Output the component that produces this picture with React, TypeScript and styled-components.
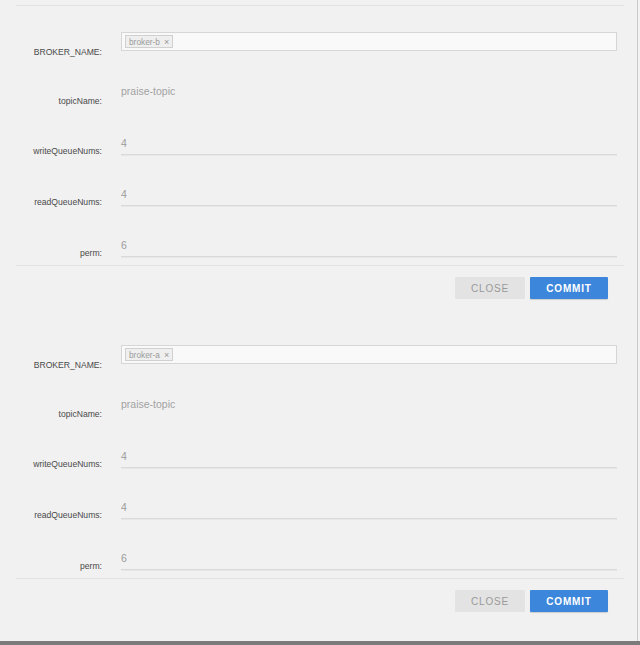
import React from "react";
import styled, { createGlobalStyle } from "styled-components";

const GlobalStyle = createGlobalStyle`
  html, body { margin: 0; padding: 0; background: #f3f3f3; }
  body { font-family: "Liberation Sans", Arial, sans-serif; }
  * { box-sizing: border-box; }
`;

const Screen = styled.div`
  width: 640px;
  height: 645px;
  display: flex;
  flex-direction: column;
  background: #f3f3f3;
`;

const Frame = styled.div`
  width: 638px;
  height: 641px;
  background: #f1f1f1;
  border-right: 1px solid #c9c9c9;
  padding-top: 5px;
  display: flex;
  flex-direction: column;
`;

const BottomBand = styled.div`
  height: 4px;
  background: #7b7b7b;
`;

const Rule = styled.div`
  height: 1px;
  margin: 0 13px 0 16px;
  background: #e2e2e2;
  flex: none;
`;

const Section = styled.section`
  padding: 27px 0 20px;
  display: flex;
  flex-direction: column;
`;

const FormGrid = styled.div`
  display: grid;
  grid-template-rows: repeat(4, 51px) 28px;
`;

const Row = styled.div`
  display: grid;
  grid-template-columns: 102px 1fr;
  column-gap: 19px;
  align-items: start;
  padding-right: 20px;
`;

const Label = styled.label<{ $pad: number }>`
  padding-top: ${(p) => p.$pad}px;
  text-align: right;
  font-size: 8.6px;
  line-height: 12px;
  color: #4a4a4a;
`;

const SelectBox = styled.div`
  height: 19px;
  margin-top: -1px;
  border: 1px solid #d6d6d6;
  background: #f9f9f9;
  padding: 2px 3px;
  display: flex;
  align-items: center;
`;

const Tag = styled.span`
  display: inline-flex;
  align-items: center;
  gap: 4px;
  height: 13px;
  padding: 0 3px;
  border: 1px solid #d0d0d0;
  background: #efefef;
  font-size: 8.3px;
  color: #9a9a9a;
`;

const TagClose = styled.span`
  font-size: 9px;
  color: #999;
`;

const PlainValue = styled.div`
  font-size: 10.5px;
  line-height: 14px;
  color: #a2a2a2;
`;

const NumberField = styled.div`
  height: 20px;
  padding-top: 1px;
  border-bottom: 1px solid #dadada;
  box-shadow: 0 1px 0 #e7e7e7;
  font-size: 10.5px;
  line-height: 14px;
  color: #9c9c9c;
`;

const Footer = styled.div`
  display: flex;
  justify-content: flex-end;
  gap: 5px;
  padding: 11px 29px 0 0;
`;

const Button = styled.button<{ $primary?: boolean }>`
  height: 22px;
  width: ${(p) => (p.$primary ? 78 : 70)}px;
  border: none;
  border-radius: 1px;
  font-family: "Liberation Sans", Arial, sans-serif;
  font-size: 10px;
  letter-spacing: 0.8px;
  font-weight: ${(p) => (p.$primary ? 700 : 400)};
  background: ${(p) => (p.$primary ? "#3c86db" : "#e3e3e3")};
  color: ${(p) => (p.$primary ? "#ffffff" : "#999999")};
  box-shadow: ${(p) => (p.$primary ? "0 1px 1px rgba(0,0,0,0.15)" : "none")};
  padding: 0;
  cursor: pointer;
`;

type TopicForm = { broker: string; topic: string; write: number; read: number; perm: number };

const forms: TopicForm[] = [
  { broker: "broker-b", topic: "praise-topic", write: 4, read: 4, perm: 6 },
  { broker: "broker-a", topic: "praise-topic", write: 4, read: 4, perm: 6 },
];

function TopicSection({ f }: { f: TopicForm }) {
  return (
    <Section>
      <FormGrid>
        <Row>
          <Label $pad={13}>BROKER_NAME:</Label>
          <SelectBox>
            <Tag>
              {f.broker}
              <TagClose>×</TagClose>
            </Tag>
          </SelectBox>
        </Row>
        <Row>
          <Label $pad={11}>topicName:</Label>
          <PlainValue>{f.topic}</PlainValue>
        </Row>
        <Row>
          <Label $pad={10}>writeQueueNums:</Label>
          <NumberField>{f.write}</NumberField>
        </Row>
        <Row>
          <Label $pad={10}>readQueueNums:</Label>
          <NumberField>{f.read}</NumberField>
        </Row>
        <Row>
          <Label $pad={10}>perm:</Label>
          <NumberField>{f.perm}</NumberField>
        </Row>
      </FormGrid>
      <Rule />
      <Footer>
        <Button>CLOSE</Button>
        <Button $primary>COMMIT</Button>
      </Footer>
    </Section>
  );
}

export default function App() {
  return (
    <>
      <GlobalStyle />
      <Screen>
        <Frame>
          <Rule />
          {forms.map((f, i) => (
            <TopicSection key={i} f={f} />
          ))}
        </Frame>
        <BottomBand />
      </Screen>
    </>
  );
}
